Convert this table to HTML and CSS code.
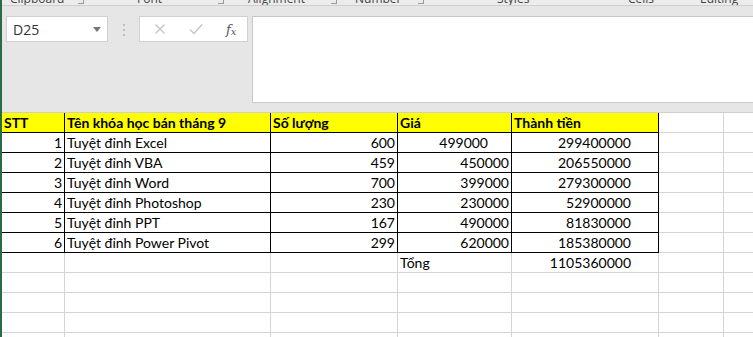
FILE: index.html
```html
<!DOCTYPE html>
<html>
<head>
<meta charset="utf-8">
<link rel="stylesheet" href="styles.css">
</head>
<body>
<div class="app">
  <div class="ribbon">
    <span class="grp g-clip">Clipboard</span><span class="launch l1"></span>
    <span class="grp g-font">Font</span><span class="launch l2"></span>
    <span class="grp g-align">Alignment</span><span class="launch l3"></span>
    <span class="grp g-num">Number</span><span class="launch l4"></span>
    <span class="grp g-sty">Styles</span>
    <span class="grp g-cell">Cells</span>
    <span class="grp g-edit">Editing</span>
  </div>
  <div class="fbar">
    <div class="namebox">
      <span class="ref">D25</span>
      <svg class="caret" width="8" height="5" viewBox="0 0 8 5"><path d="M0 0h8L4 5z" fill="#777"/></svg>
    </div>
    <div class="dots"><i></i><i></i><i></i></div>
    <div class="fxbox">
      <svg class="ico" width="12" height="12" viewBox="0 0 12 12"><path d="M1.5 1.5l9 9M10.5 1.5l-9 9" stroke="#c4c4c4" stroke-width="1.3" fill="none"/></svg>
      <svg class="ico" width="14" height="12" viewBox="0 0 14 12"><path d="M1 6.5l4 4 8-9" stroke="#c4c4c4" stroke-width="1.4" fill="none"/></svg>
      <span class="fx">f<sub>x</sub></span>
    </div>
    <div class="formula"></div>
  </div>
  <div class="sheet">
    <div class="row hdr">
      <div class="c a b y bold">STT</div>
      <div class="c bb b y bold">Tên khóa học bán tháng 9</div>
      <div class="c cc b y bold">Số lượng</div>
      <div class="c d b y bold">Giá</div>
      <div class="c e b y bold">Thành tiền</div>
      <div class="c f"></div><div class="c g"></div>
    </div>
    <div class="row">
      <div class="c a b r">1</div><div class="c bb b">Tuyệt đỉnh Excel</div><div class="c cc b r">600</div>
      <div class="c d b r ind">499000</div><div class="c e b r ind2">299400000</div><div class="c f"></div><div class="c g"></div>
    </div>
    <div class="row">
      <div class="c a b r">2</div><div class="c bb b">Tuyệt đỉnh VBA</div><div class="c cc b r">459</div>
      <div class="c d b r">450000</div><div class="c e b r ind2">206550000</div><div class="c f"></div><div class="c g"></div>
    </div>
    <div class="row">
      <div class="c a b r">3</div><div class="c bb b">Tuyệt đỉnh Word</div><div class="c cc b r">700</div>
      <div class="c d b r">399000</div><div class="c e b r ind2">279300000</div><div class="c f"></div><div class="c g"></div>
    </div>
    <div class="row">
      <div class="c a b r">4</div><div class="c bb b">Tuyệt đỉnh Photoshop</div><div class="c cc b r">230</div>
      <div class="c d b r">230000</div><div class="c e b r ind2">52900000</div><div class="c f"></div><div class="c g"></div>
    </div>
    <div class="row">
      <div class="c a b r">5</div><div class="c bb b">Tuyệt đỉnh PPT</div><div class="c cc b r">167</div>
      <div class="c d b r">490000</div><div class="c e b r ind2">81830000</div><div class="c f"></div><div class="c g"></div>
    </div>
    <div class="row">
      <div class="c a b r">6</div><div class="c bb b">Tuyệt đỉnh Power Pivot</div><div class="c cc b r">299</div>
      <div class="c d b r">620000</div><div class="c e b r ind2">185380000</div><div class="c f"></div><div class="c g"></div>
    </div>
    <div class="row">
      <div class="c a"></div><div class="c bb"></div><div class="c cc"></div>
      <div class="c d">Tổng</div><div class="c e r ind2">1105360000</div><div class="c f"></div><div class="c g"></div>
    </div>
    <div class="row"><div class="c a"></div><div class="c bb"></div><div class="c cc"></div><div class="c d"></div><div class="c e"></div><div class="c f"></div><div class="c g"></div></div>
    <div class="row"><div class="c a"></div><div class="c bb"></div><div class="c cc"></div><div class="c d"></div><div class="c e"></div><div class="c f"></div><div class="c g"></div></div>
    <div class="row"><div class="c a"></div><div class="c bb"></div><div class="c cc"></div><div class="c d"></div><div class="c e"></div><div class="c f"></div><div class="c g"></div></div>
    <div class="row"><div class="c a"></div><div class="c bb"></div><div class="c cc"></div><div class="c d"></div><div class="c e"></div><div class="c f"></div><div class="c g"></div></div>
  </div>
</div>
</body>
</html>
```
FILE: styles.css
```css
html, body { margin: 0; padding: 0; }
body { width: 753px; height: 337px; overflow: hidden; background: #fff; }
.app {
  width: 753px; height: 337px; box-sizing: border-box;
  border-left: 2px solid #2b6a47;
  background: #e6e6e6;
  font-family: "Segoe UI", "Open Sans", "Noto Sans", sans-serif;
  overflow: hidden;
}
.ribbon {
  position: relative;
  height: 5px; background: #ececec; border-bottom: 1px solid #cfcfcf;
  overflow: hidden;
}
.grp {
  position: absolute; bottom: 0; font-size: 12px; line-height: 12px; color: #444;
}
.g-clip { left: 8px; } .g-font { left: 135px; } .g-align { left: 246px; }
.g-num { left: 353px; } .g-sty { left: 495px; } .g-cell { left: 626px; } .g-edit { left: 698px; }
.launch { position: absolute; bottom: 1px; width: 5px; height: 3px; border-right: 1px solid #999; border-bottom: 1px solid #999; }
.l1 { left: 76px; } .l2 { left: 216px; } .l3 { left: 329px; } .l4 { left: 416px; }

.fbar {
  display: flex; align-items: flex-start; height: 106px;
  padding-top: 10px; box-sizing: border-box;
}
.namebox {
  margin-left: 4px; height: 24px; background: #fff; border: 1px solid #d0d0d0;
  display: flex; align-items: center; justify-content: space-between; padding: 0 6px 0 6px; box-sizing: content-box;
  width: 88px;
}
.ref { font-size: 14px; color: #333; }
.dots { width: 31px; display: flex; flex-direction: column; align-items: center; gap: 3px; padding-top: 8px; }
.dots i { display: block; width: 2px; height: 2px; background: #bdbdbd; }
.fxbox {
  width: 109px; height: 26px; background: #fff; border: 1px solid #d0d0d0;
  display: flex; align-items: center; padding-left: 14px; box-sizing: border-box; gap: 23px;
}
.fx { font-family: "DejaVu Serif", "Liberation Serif", serif; font-style: italic; font-size: 13px; color: #555; margin-left: 0px; }
.fx sub { font-size: 10px; vertical-align: -1px; }
.formula {
  margin-left: 4px; flex: 1; height: 85px; background: #fff; border: 1px solid #c8c8c8; border-right: none;
}

.sheet { background: #fff; border-top: 1px solid #cfcfcf; }
.row { display: flex; height: 20px; }
.c {
  box-sizing: border-box; height: 20px; border-right: 1px solid #d4d4d4; border-bottom: 1px solid #d4d4d4;
  font-family: "Lato", "Open Sans", sans-serif; font-size: 14px; line-height: 19px; color: #000;
  padding: 0 2px; white-space: nowrap; overflow: hidden;
}
.a { width: 63px; } .bb { width: 206px; } .cc { width: 127px; } .d { width: 114px; } .e { width: 147px; } .f { width: 65px; } .g { flex: 1; border-right: none; }
.b { border-right-color: #000; border-bottom-color: #000; }
.y { background: #ffff00; }
.bold { font-weight: 700; }
.r { text-align: right; }
.ind { padding-right: 23px; }
.ind2 { padding-right: 27px; }
```
